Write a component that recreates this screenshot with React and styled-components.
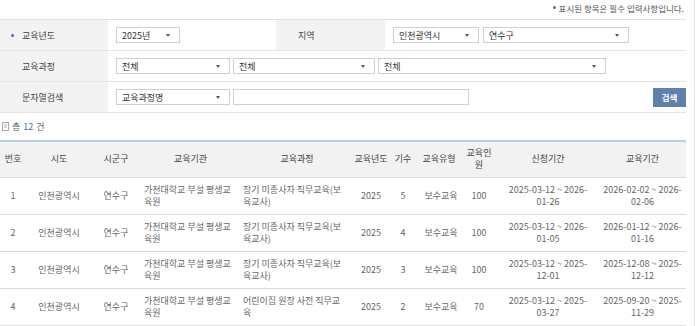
import React from "react";
import styled, { createGlobalStyle } from "styled-components";

const Global = createGlobalStyle`
  html, body { margin: 0; padding: 0; background: #fff; }
  body {
    font-family: "Noto Sans CJK KR", "Noto Sans", sans-serif;
    font-size: 9px;
    color: #555;
  }
  * { box-sizing: border-box; }
`;

const Page = styled.div`
  display: flex;
  width: 695px;
  height: 326px;
  overflow: hidden;
  border-right: 1px solid #e1e5ea;
`;

const Main = styled.div`
  width: 686px;
  display: flex;
  flex-direction: column;
`;

const Notice = styled.div`
  height: 20px;
  display: flex;
  align-items: center;
  justify-content: flex-end;
  padding-right: 2px;
  padding-bottom: 4px;
  color: #555;
  font-size: 8.5px;
`;

const Dot = styled.span`
  display: inline-block;
  width: 3px;
  height: 3px;
  border-radius: 50%;
  background: #3b6fb6;
  margin-right: ${(p) => p.$gap || 3}px;
`;

const Form = styled.div`
  display: grid;
  grid-template-columns: 108px 168px 109px 1fr;
  border-top: 1px solid #d5e3f0;
`;

const Label = styled.div`
  height: 31px;
  background: #f3f3f3;
  display: flex;
  align-items: center;
  padding-left: ${(p) => (p.$required ? 11 : 22)}px;
  color: #444;
  border-bottom: 1px solid #e4e4e4;
`;

const Value = styled.div`
  height: 31px;
  display: flex;
  align-items: center;
  gap: ${(p) => p.$gap || 3}px;
  padding-left: 8px;
  grid-column: ${(p) => (p.$span ? "span 3" : "auto")};
  border-bottom: 1px solid #e4e4e4;
`;

const SelectBox = styled.div`
  width: ${(p) => p.$w}px;
  height: 16px;
  border: 1px solid #cfcfcf;
  background: #fff;
  display: flex;
  align-items: center;
  justify-content: space-between;
  padding: 0 9px 0 5px;
  color: #333;
  flex: none;
`;

const Arrow = styled.span`
  width: 0;
  height: 0;
  border-left: 2.5px solid transparent;
  border-right: 2.5px solid transparent;
  border-top: 3px solid #555;
`;

const TextInput = styled.div`
  width: ${(p) => p.$w}px;
  height: 16px;
  border: 1px solid #cfcfcf;
  background: #fff;
  flex: none;
`;

const Button = styled.button`
  margin-left: auto;
  width: 33px;
  height: 19px;
  border: none;
  background: #5f80ad;
  color: #fff;
  font-family: inherit;
  font-size: 8.5px;
  font-weight: bold;
  padding: 0;
`;

const CountBar = styled.div`
  height: 28px;
  display: flex;
  align-items: center;
  padding-left: 2px;
  color: #666;
  gap: 3px;
`;

const Num = styled.span`
  color: #3a6fc4;
  margin: 0 1px;
`;

const Table = styled.table`
  width: 686px;
  border-collapse: collapse;
  table-layout: fixed;
  border-top: 2px solid #b7d0ea;
`;

const Th = styled.th`
  height: 37px;
  background: #f2f2f2;
  font-weight: normal;
  color: #444;
  line-height: 12px;
  padding: ${(p) => p.$pad || "0 4px"};
  border-bottom: 1px solid #dcdcdc;
  text-align: center;
`;

const Td = styled.td`
  height: 37px;
  line-height: 12.5px;
  padding: ${(p) => p.$pad || "0 4px"};
  border-bottom: 1px solid #dcdcdc;
  text-align: ${(p) => (p.$left ? "left" : "center")};
  color: #666;
  vertical-align: middle;
`;

const cols = [
  { key: "no", title: "번호", w: 26, pad: "0 1px" },
  { key: "sido", title: "시도", w: 66 },
  { key: "sgg", title: "시군구", w: 48 },
  { key: "org", title: "교육기관", w: 101, left: true, pad: "0 4px 0 4px" },
  { key: "course", title: "교육과정", w: 112, left: true, pad: "0 6px 0 2px" },
  { key: "year", title: "교육년도", w: 36, pad: "0", thPad: "0" },
  { key: "round", title: "기수", w: 28, pad: "0" },
  { key: "type", title: "교육유형", w: 44, pad: "0 0 0 4px" },
  { key: "cnt", title: "교육인원", w: 36, pad: "0 4px", thPad: "0 4px" },
  { key: "apply", title: "신청기간", w: 102, pad: "0 10px" },
  { key: "edu", title: "교육기간", w: 87, pad: "0 3px" },
];

const rows = [
  { no: 1, sido: "인천광역시", sgg: "연수구", org: "가천대학교 부설 평생교육원", course: "장기 미종사자 직무교육(보육교사)", year: "2025", round: 5, type: "보수교육", cnt: 100, apply: "2025-03-12 ~ 2026-01-26", edu: "2026-02-02 ~ 2026-02-06" },
  { no: 2, sido: "인천광역시", sgg: "연수구", org: "가천대학교 부설 평생교육원", course: "장기 미종사자 직무교육(보육교사)", year: "2025", round: 4, type: "보수교육", cnt: 100, apply: "2025-03-12 ~ 2026-01-05", edu: "2026-01-12 ~ 2026-01-16" },
  { no: 3, sido: "인천광역시", sgg: "연수구", org: "가천대학교 부설 평생교육원", course: "장기 미종사자 직무교육(보육교사)", year: "2025", round: 3, type: "보수교육", cnt: 100, apply: "2025-03-12 ~ 2025-12-01", edu: "2025-12-08 ~ 2025-12-12" },
  { no: 4, sido: "인천광역시", sgg: "연수구", org: "가천대학교 부설 평생교육원", course: "어린이집 원장 사전 직무교육", year: "2025", round: 2, type: "보수교육", cnt: 70, apply: "2025-03-12 ~ 2025-03-27", edu: "2025-09-20 ~ 2025-11-29" },
];

const Select = ({ w, children }) => (
  <SelectBox $w={w}>
    <span>{children}</span>
    <Arrow />
  </SelectBox>
);

const DocIcon = () => (
  <svg width="7" height="9" viewBox="0 0 7 9">
    <rect x="0.5" y="0.5" width="6" height="8" fill="#fff" stroke="#aaa" />
    <line x1="2" y1="3" x2="5" y2="3" stroke="#aaa" />
    <line x1="2" y1="5" x2="5" y2="5" stroke="#aaa" />
  </svg>
);

export default function App() {
  return (
    <>
      <Global />
      <Page>
        <Main>
          <Notice>
            <Dot />
            표시된 항목은 필수 입력사항입니다.
          </Notice>
          <Form>
            <Label $required>
              <Dot $gap={8} />
              교육년도
            </Label>
            <Value>
              <Select w={64}>2025년</Select>
            </Value>
            <Label>지역</Label>
            <Value $gap={4}>
              <Select w={86}>인천광역시</Select>
              <Select w={146}>연수구</Select>
            </Value>

            <Label>교육과정</Label>
            <Value $span>
              <Select w={114}>전체</Select>
              <Select w={142}>전체</Select>
              <Select w={228}>전체</Select>
            </Value>

            <Label>문자열검색</Label>
            <Value $span>
              <Select w={114}>교육과정명</Select>
              <TextInput $w={236} />
              <Button>검색</Button>
            </Value>
          </Form>
          <CountBar>
            <DocIcon />
            <span>
              총 <Num>12</Num> 건
            </span>
          </CountBar>
          <Table>
            <colgroup>
              {cols.map((c) => (
                <col key={c.key} style={{ width: c.w }} />
              ))}
            </colgroup>
            <thead>
              <tr>
                {cols.map((c) => (
                  <Th key={c.key} $pad={c.thPad}>
                    {c.title}
                  </Th>
                ))}
              </tr>
            </thead>
            <tbody>
              {rows.map((r) => (
                <tr key={r.no}>
                  {cols.map((c) => (
                    <Td key={c.key} $left={c.left} $pad={c.pad}>
                      {r[c.key]}
                    </Td>
                  ))}
                </tr>
              ))}
            </tbody>
          </Table>
        </Main>
      </Page>
    </>
  );
}
